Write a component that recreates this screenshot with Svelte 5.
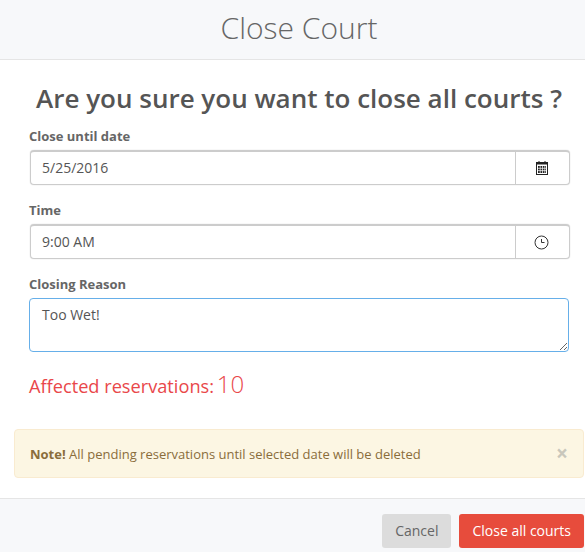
<script>
    let until = '5/25/2016';
    let time = '9:00 AM';
    let reason = 'Too Wet!';
    let affected = 10;
</script>

<div class="modal">
    <header class="modal-header">
        <h3>Close Court</h3>
    </header>

    <div class="modal-body">
        <h2>Are you sure you want to close all courts ?</h2>

        <div class="form">
            <label class="field">
                <span class="label">Close until date</span>
                <div class="input-group">
                    <input type="text" bind:value={until} />
                    <span class="addon">
                        <svg width="14" height="16" viewBox="0 0 14 16" fill="none" stroke="#222">
                            <rect x="1.5" y="2.5" width="11" height="12" />
                            <path d="M1.5 3.5h11" stroke-width="2" />
                            <path d="M4 1v2M10 1v2" />
                            <path d="M3 6h8v7H3z" fill="#222" stroke="none" />
                            <path d="M5.2 6v7M7.5 6v7M9.8 6v7M3 8.3h8M3 10.6h8" stroke="#fff" stroke-width="0.7" />
                        </svg>
                    </span>
                </div>
            </label>

            <label class="field">
                <span class="label">Time</span>
                <div class="input-group">
                    <input type="text" bind:value={time} />
                    <span class="addon">
                        <svg width="15" height="15" viewBox="0 0 15 15" fill="none" stroke="#333">
                            <circle cx="7.5" cy="7.5" r="6.5" />
                            <path d="M7.5 4v3.5h3" />
                        </svg>
                    </span>
                </div>
            </label>

            <label class="field">
                <span class="label">Closing Reason</span>
                <textarea bind:value={reason}></textarea>
            </label>

            <p class="affected">Affected reservations: <span class="count">{affected}</span></p>
        </div>

        <div class="alert">
            <span><strong>Note!</strong> All pending reservations until selected date will be deleted</span>
            <span class="close">×</span>
        </div>
    </div>

    <footer class="modal-footer">
        <button class="btn cancel">Cancel</button>
        <button class="btn danger">Close all courts</button>
    </footer>
</div>

<style>
    :global(body) {
        margin: 0;
        background: #fff;
    }

    .modal {
        width: 585px;
        height: 552px;
        display: flex;
        flex-direction: column;
        font-family: "Open Sans", sans-serif;
        font-size: 14px;
        color: #555;
        overflow: hidden;
    }

    .modal-header {
        height: 55px;
        background: #f7f8fa;
        border-bottom: 1px solid #e5e5e5;
        display: flex;
        align-items: center;
        justify-content: center;
        padding: 0 0 4px 13px;
        flex: none;
    }

    h3 {
        margin: 0;
        font-size: 30px;
        font-weight: 300;
        color: #666;
    }

    .modal-body {
        flex: 1;
        padding: 20px 1px 0 14px;
    }

    h2 {
        margin: 0 0 11px;
        font-size: 26px;
        line-height: 36px;
        font-weight: 600;
        color: #555;
        text-align: center;
    }

    .form {
        padding: 0 15px;
    }

    .field {
        display: block;
        margin-bottom: 16px;
    }

    .label {
        display: block;
        font-size: 13px;
        font-weight: 700;
        line-height: 18px;
        color: #666;
        margin-bottom: 5px;
    }

    .input-group {
        display: flex;
        height: 35px;
        box-sizing: border-box;
        margin: 0 -1px 0 1px;
        border: 1px solid #ccc;
        border-top: 2px solid #ccc;
        border-radius: 4px;
        box-shadow: 0 0 1px #bbb;
    }

    input {
        flex: 1;
        min-width: 0;
        border: 0;
        outline: 0;
        padding: 0 12px 2px 11px;
        font: inherit;
        color: #555;
        background: transparent;
    }

    .addon {
        width: 51px;
        padding-right: 2px;
        border-left: 1px solid #ccc;
        display: flex;
        align-items: center;
        justify-content: center;
    }

    textarea {
        display: block;
        width: 100%;
        height: 54px;
        box-sizing: border-box;
        border: 1px solid #66afe9;
        border-radius: 4px;
        outline: 0;
        padding: 6px 12px;
        font: inherit;
        line-height: 20px;
        color: #555;
    }

    .affected {
        margin: 11px 0 27px;
        font-size: 18.2px;
        line-height: 32px;
        color: #e9474a;
    }

    .count {
        font-size: 24px;
        font-weight: 300;
        margin-left: -2px;
    }

    .alert {
        height: 49px;
        box-sizing: border-box;
        background: #fcf6e3;
        border: 1px solid #f9ebd0;
        border-radius: 4px;
        padding: 0 15px;
        display: flex;
        align-items: center;
        justify-content: space-between;
        font-size: 13px;
        color: #8a6d3b;
    }

    .close {
        font-size: 21px;
        font-weight: 700;
        color: #c9c7bc;
        line-height: 1;
    }

    .modal-footer {
        height: 54px;
        flex: none;
        box-sizing: border-box;
        background: #f7f8fa;
        border-top: 1px solid #e5e5e5;
        padding: 15px 1px 0 0;
        display: flex;
        justify-content: flex-end;
        gap: 8px;
    }

    .btn {
        height: 34px;
        border: 0;
        border-radius: 3px;
        font: inherit;
        padding: 0 13px 2px;
    }

    .cancel {
        background: #dcdcdc;
        color: #666;
    }

    .danger {
        background: #e74c3c;
        color: #fff;
    }
</style>
